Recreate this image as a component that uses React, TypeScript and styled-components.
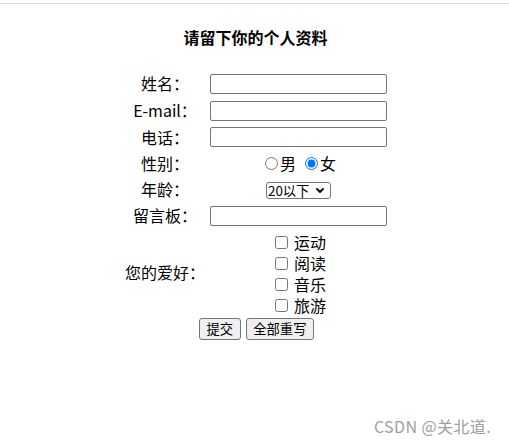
import React from "react";
import styled, { createGlobalStyle } from "styled-components";

const Global = createGlobalStyle`
  html, body { margin: 0; padding: 0; background: #fff; }
  body {
    font-family: "Microsoft YaHei", "Noto Sans CJK SC", "Noto Sans", sans-serif;
    font-size: 16px;
    color: #000;
  }
`;

const Page = styled.div`
  position: relative;
  width: 509px;
  height: 446px;
  overflow: hidden;
`;

const TopRule = styled.div`
  margin-top: 3px;
  height: 1px;
  background: #dcdcdc;
`;

const Title = styled.h3`
  margin: 0;
  height: 66px;
  display: flex;
  align-items: center;
  justify-content: center;
  padding-left: 2px;
  font-size: 16px;
  font-weight: bold;
  line-height: 21px;
`;

const Form = styled.form`
  display: grid;
  grid-template-columns: 90px 177px;
  justify-content: center;
  padding-right: 2px;
`;

const Label = styled.div<{ $h: number }>`
  height: ${(p) => p.$h}px;
  display: flex;
  align-items: center;
  justify-content: center;
  line-height: 21px;
  white-space: nowrap;
`;

const Field = styled.div<{ $h: number }>`
  height: ${(p) => p.$h}px;
  display: flex;
  align-items: center;
  justify-content: center;
  line-height: 21px;
`;

const TextInput = styled.input`
  box-sizing: border-box;
  width: 177px;
  height: 20px;
  margin: 0;
  padding: 1px 2px;
  border: 1px solid #767676;
  border-radius: 2px;
  font-size: 13.33px;
  background: #fff;
`;

const RadioGroup = styled.div`
  display: flex;
  align-items: center;
  margin-left: 4px;
`;

const RadioLabel = styled.label<{ $first?: boolean }>`
  display: flex;
  align-items: center;
  margin-left: ${(p) => (p.$first ? 0 : 9)}px;
`;

const Radio = styled.input`
  width: 13px;
  height: 13px;
  margin: 0 2px 0 0;
  accent-color: #0075ff;
`;

const SelectBox = styled.div`
  position: relative;
  display: flex;
  margin-top: 1px;
`;

const Select = styled.select`
  appearance: none;
  -webkit-appearance: none;
  box-sizing: border-box;
  width: 65px;
  height: 17px;
  margin: 0;
  padding: 0 0 0 1px;
  border: 1px solid #767676;
  border-radius: 3px;
  font-family: "Microsoft YaHei", "Noto Sans CJK SC", sans-serif;
  font-size: 13.33px;
  line-height: 15px;
  background: #fff;
  color: #000;
`;

const Chevron = styled.svg`
  position: absolute;
  right: 7px;
  top: 6px;
  width: 8px;
  height: 5px;
  pointer-events: none;
`;

const CheckList = styled.div`
  display: flex;
  flex-direction: column;
  padding-top: 4px;
`;

const CheckLine = styled.label`
  height: 21px;
  display: flex;
  align-items: center;
  line-height: 21px;
  white-space: nowrap;
`;

const Check = styled.input`
  width: 13px;
  height: 13px;
  margin: 0 6px 0 4px;
`;

const Buttons = styled.div`
  grid-column: 1 / 3;
  height: 26px;
  display: flex;
  align-items: center;
  justify-content: center;
  gap: 5px;
  padding-left: 6px;
`;

const Button = styled.button`
  box-sizing: border-box;
  height: 22px;
  margin: 0;
  padding: 1px 6.5px;
  border: 1px solid #767676;
  border-radius: 3px;
  background: #efefef;
  font-family: "Microsoft YaHei", "Noto Sans CJK SC", sans-serif;
  font-size: 13.33px;
  line-height: 18px;
  color: #000;
`;

const Watermark = styled.div`
  position: absolute;
  right: 18px;
  top: 415px;
  font-family: "Noto Sans CJK SC", sans-serif;
  font-size: 16px;
  line-height: 22px;
  letter-spacing: 0.4px;
  color: #a0a0a0;
`;

const hobbies = ["运动", "阅读", "音乐", "旅游"];

export default function App() {
  return (
    <Page>
      <Global />
      <TopRule />
      <Title>请留下你的个人资料</Title>
      <Form onSubmit={(e) => e.preventDefault()}>
        <Label $h={27}>姓名：</Label>
        <Field $h={27}>
          <TextInput type="text" />
        </Field>
        <Label $h={27}>E-mail：</Label>
        <Field $h={27}>
          <TextInput type="text" />
        </Field>
        <Label $h={26}>电话：</Label>
        <Field $h={26}>
          <TextInput type="text" />
        </Field>
        <Label $h={26}>性别：</Label>
        <Field $h={26}>
          <RadioGroup>
            <RadioLabel $first>
              <Radio type="radio" name="sex" />男
            </RadioLabel>
            <RadioLabel>
              <Radio type="radio" name="sex" defaultChecked />女
            </RadioLabel>
          </RadioGroup>
        </Field>
        <Label $h={27}>年龄：</Label>
        <Field $h={27}>
          <SelectBox>
            <Select defaultValue="a">
              <option value="a">20以下</option>
              <option value="b">20-30</option>
              <option value="c">30以上</option>
            </Select>
            <Chevron viewBox="0 0 8 5">
              <path d="M1 1 L4 4 L7 1" fill="none" stroke="#000" strokeWidth="1.8" strokeLinecap="round" strokeLinejoin="round" />
            </Chevron>
          </SelectBox>
        </Field>
        <Label $h={25}>留言板：</Label>
        <Field $h={25}>
          <TextInput type="text" />
        </Field>
        <Label $h={88}>您的爱好：</Label>
        <Field $h={88}>
          <CheckList>
            {hobbies.map((h) => (
              <CheckLine key={h}>
                <Check type="checkbox" />
                {h}
              </CheckLine>
            ))}
          </CheckList>
        </Field>
        <Buttons>
          <Button type="submit">提交</Button>
          <Button type="reset">全部重写</Button>
        </Buttons>
      </Form>
      <Watermark>CSDN @关北道.</Watermark>
    </Page>
  );
}
